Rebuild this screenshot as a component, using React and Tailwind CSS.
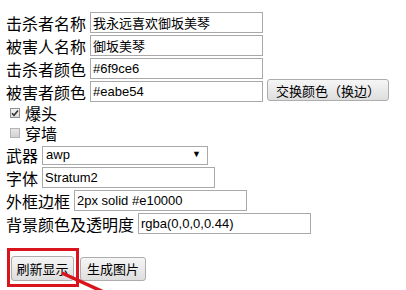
import React from 'react';

const cjk = "font-['Noto_Sans_CJK_SC','Microsoft_YaHei',sans-serif]";
const inputCls =
  "h-[21px] w-[173px] border border-[#a9a9a9] bg-white px-[2px] text-[13px] leading-none text-black outline-none font-['Liberation_Sans','Noto_Sans_CJK_SC',sans-serif]";
const btnCls =
  "flex shrink-0 items-center justify-center whitespace-nowrap rounded-[3px] border border-[#adadad] bg-gradient-to-b from-[#f6f6f6] to-[#dedede] px-0 text-[13px] leading-none text-black font-['Noto_Sans_CJK_SC',sans-serif]";

const Field = ({ label, value }) => (
  <div className="flex h-[23px] items-center gap-[4px]">
    <span className={`text-[16px] leading-[18px] text-black ${cjk}`}>{label}</span>
    <input className={inputCls} defaultValue={value} readOnly />
  </div>
);

const Check = ({ label, checked }) => (
  <div className="flex h-[20px] items-center gap-[5px] pl-[4px]">
    <span
      className={
        checked
          ? 'flex h-[10px] w-[10px] items-center justify-center border border-[#8e8f8f] bg-gradient-to-b from-[#f4f4f4] to-[#dcdcdc]'
          : 'h-[10px] w-[10px] border border-[#b4b4b4] bg-gradient-to-b from-[#e6e6e6] to-[#d2d2d2]'
      }
    >
      {checked && (
        <svg width="8" height="8" viewBox="0 0 8 8">
          <path d="M1 4.2 L3 6.3 L7 1.5" fill="none" stroke="#333" strokeWidth="1.6" />
        </svg>
      )}
    </span>
    <span className={`text-[16px] leading-[18px] text-black ${cjk}`}>{label}</span>
  </div>
);

export default function App() {
  return (
    <div className="relative h-[290px] w-[406px] overflow-hidden bg-white pl-[6px] pt-[11px]">
      <Field label="击杀者名称" value="我永远喜欢御坂美琴" />
      <Field label="被害人名称" value="御坂美琴" />
      <Field label="击杀者颜色" value="#6f9ce6" />
      <div className="flex h-[23px] items-center">
        <span className={`mr-[4px] text-[16px] leading-[18px] text-black ${cjk}`}>被害者颜色</span>
        <input className={inputCls} defaultValue="#eabe54" readOnly />
        <button className={`${btnCls} ml-[4px] -mt-[3px] h-[22px] w-[122px]`}>交换颜色（换边）</button>
      </div>

      <Check label="爆头" checked />
      <Check label="穿墙" />

      <div className="mt-[1px] flex h-[22px] items-center gap-[4px]">
        <span className={`text-[16px] leading-[18px] text-black ${cjk}`}>武器</span>
        <div className="flex h-[19px] w-[166px] items-center justify-between border border-[#a9a9a9] bg-white pl-[3px] pr-[6px] text-[13px] text-black font-['Liberation_Sans',sans-serif]">
          <span>awp</span>
          <span className="text-[9px]">▼</span>
        </div>
      </div>
      <Field label="字体" value="Stratum2" />
      <Field label="外框边框" value="2px solid #e10000" />
      <Field label="背景颜色及透明度" value="rgba(0,0,0,0.44)" />

      <div className="mt-[21px] flex items-center gap-[6px] pl-[5px]">
        <button className={`${btnCls} h-[25px] w-[63px] border-[#7a9cc8]`}>刷新显示</button>
        <button className={`${btnCls} h-[24px] w-[66px]`}>生成图片</button>
      </div>

      {/* annotation overlay */}
      <div className="absolute left-[7px] top-[248px] h-[39px] w-[72px] border-[3px] border-[#d9141c]"></div>
      <svg className="absolute left-0 top-0" width="406" height="290" viewBox="0 0 406 290">
        <line x1="62" y1="273" x2="108" y2="294" stroke="#d9141c" strokeWidth="3.5" />
      </svg>
    </div>
  );
}
